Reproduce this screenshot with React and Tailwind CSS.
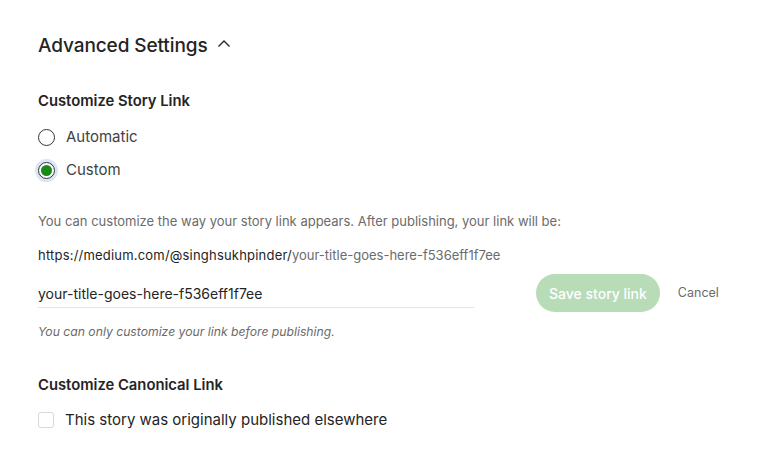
const font = { fontFamily: 'Inter, "Liberation Sans", sans-serif' };

export default function App() {
  return (
    <div className="w-[779px] h-[470px] bg-white text-[#242424] px-[38px] pt-[32px]" style={font}>
      <div className="flex items-center gap-[9px]">
        <h2 className="text-[19px] leading-[28px] font-medium tracking-[-0.1px]">Advanced Settings</h2>
        <svg width="14" height="14" viewBox="0 0 14 14" fill="none" stroke="#242424" strokeWidth="1.4" className="mt-[-4px]">
          <path d="M1.5 9.5 L7 4 L12.5 9.5" />
        </svg>
      </div>

      <h3 className="mt-[31px] text-[14.8px] leading-[20px] font-semibold">Customize Story Link</h3>

      <div className="mt-[16px] flex flex-col gap-[13px]">
        <label className="flex items-center gap-[11px] h-[20px]">
          <span className="w-[17px] h-[17px] rounded-full border border-[#333] bg-white" />
          <span className="text-[15px] text-[#424242]">Automatic</span>
        </label>
        <label className="flex items-center gap-[11px] h-[20px]">
          <span className="w-[17px] h-[17px] rounded-full border border-[#333] bg-white flex items-center justify-center ring-[3px] ring-[#dbe6f3]">
            <span className="w-[11px] h-[11px] rounded-full bg-[#1a8917]" />
          </span>
          <span className="text-[15px] text-[#424242]">Custom</span>
        </label>
      </div>

      <p className="mt-[31px] text-[13px] leading-[20px] text-[#6b6b6b]">
        You can customize the way your story link appears. After publishing, your link will be:
      </p>
      <p className="mt-[14px] text-[13px] leading-[20px]">
        <span className="tracking-[0.2px]">https://medium.com/@singhsukhpinder/</span>
        <span className="text-[#6b6b6b]">your-title-goes-here-f536eff1f7ee</span>
      </p>

      <div className="mt-[9px] flex items-start">
        <div className="w-[436px] border-b border-[#e6e6e6] pt-[10px] pb-[3px]">
          <input
            className="block w-full h-[20px] p-0 outline-none text-[14px] leading-[20px] text-[#242424] bg-transparent"
            defaultValue="your-title-goes-here-f536eff1f7ee"
          />
        </div>
        <button className="ml-[62px] h-[38px] px-[13px] rounded-full bg-[#b8dbb8] text-white text-[14px] font-medium">
          Save story link
        </button>
        <button className="ml-[18px] h-[38px] text-[12.5px] text-[#6b6b6b]">Cancel</button>
      </div>

      <p className="mt-[11px] text-[12.2px] leading-[18px] italic text-[#6b6b6b]">
        You can only customize your link before publishing.
      </p>

      <h3 className="mt-[34px] text-[14.8px] leading-[20px] font-semibold">Customize Canonical Link</h3>

      <label className="mt-[14px] flex items-center gap-[11px]">
        <span className="w-[16px] h-[16px] rounded-[3px] border border-[#d9d9d9] bg-white" />
        <span className="text-[15px] text-[#242424]">This story was originally published elsewhere</span>
      </label>
    </div>
  );
}
